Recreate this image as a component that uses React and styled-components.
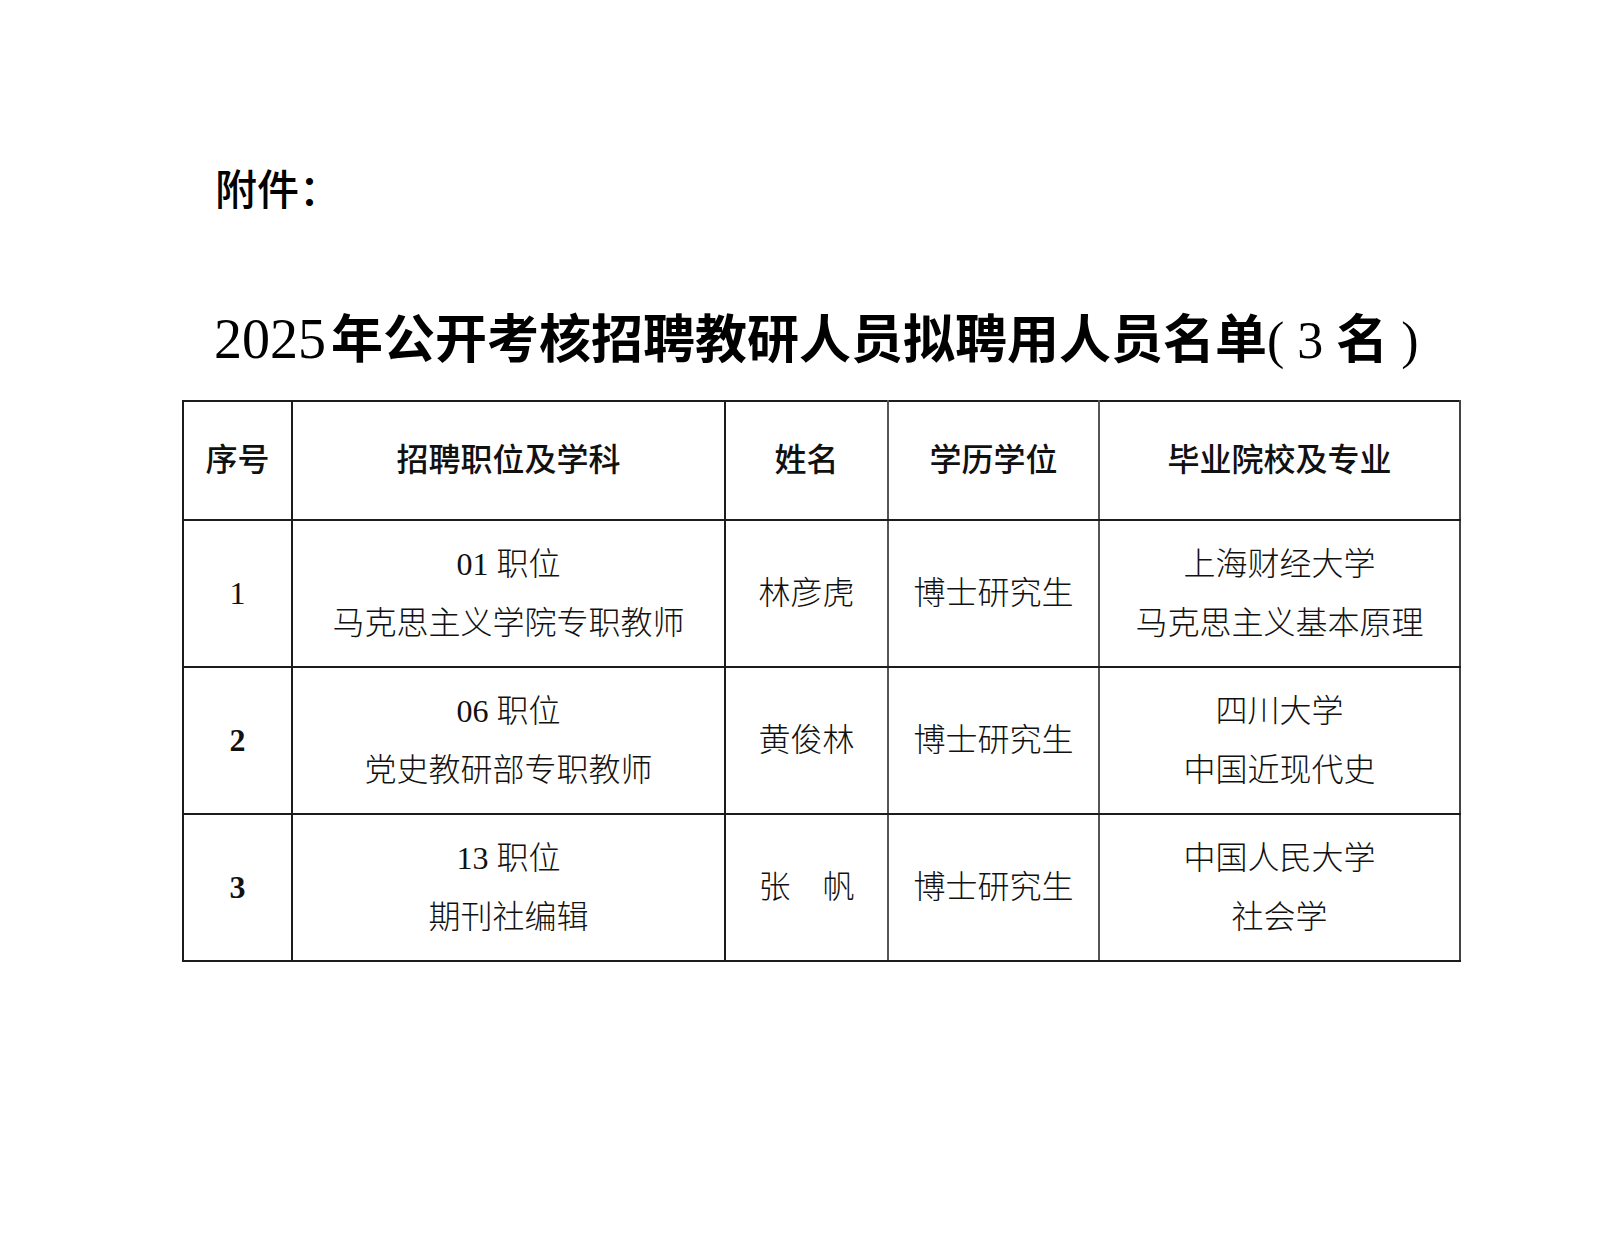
import React from "react";
import styled, { createGlobalStyle } from "styled-components";

const GlobalStyle = createGlobalStyle`
  html, body {
    margin: 0;
    padding: 0;
    background: #ffffff;
  }
  body {
    font-family: "Liberation Serif", "Noto Sans CJK SC", serif;
    color: #111;
  }
`;

const Page = styled.div`
  width: 1600px;
  height: 1252px;
  box-sizing: border-box;
  padding-top: 166px;
  background: #fff;
`;

const Attachment = styled.div`
  margin-left: 215px;
  font-family: "Noto Sans CJK SC", sans-serif;
  font-size: 42px;
  line-height: 42px;
  font-weight: 500;
  color: #000;
`;

const Title = styled.h1`
  margin: 98px 0 29px 214px;
  font-family: "Liberation Serif", "Noto Sans CJK SC", serif;
  font-size: 52px;
  line-height: 60px;
  font-weight: 700;
  color: #000;
  white-space: nowrap;
`;

const Digits = styled.span`
  font-family: "Liberation Serif", serif;
  font-size: 56px;
  font-weight: 400;
  margin-right: 5px;
`;

const Paren = styled.span`
  font-family: "Liberation Serif", "Noto Sans CJK SC", serif;
  font-weight: 400;
  white-space: pre;
  & > b {
    font-family: "Noto Sans CJK SC", sans-serif;
    font-weight: 700;
  }
`;

const Table = styled.table`
  margin-left: 182px;
  width: 1279px;
  border-collapse: collapse;
  table-layout: fixed;
`;

const HeadRow = styled.tr`
  height: 119px;
`;

const BodyRow = styled.tr`
  height: 147px;
`;

const Cell = styled.td`
  padding: 0;
  text-align: center;
  vertical-align: middle;
  font-size: 32px;
  line-height: 59px;
  font-weight: ${(p) => (p.$head ? 500 : 300)};
  color: #111;
  border-top: 2px solid #1c1c1c;
  border-bottom: 2px solid #1c1c1c;
  border-left: 2px solid ${(p) => p.$lineColor || "#1c1c1c"};
  border-right: 2px solid ${(p) => p.$rightColor || "#1c1c1c"};
  white-space: nowrap;
`;

const IndexNum = styled.span`
  font-family: "Liberation Serif", serif;
  font-size: 32px;
  font-weight: ${(p) => (p.$bold ? 700 : 400)};
`;

const Line = styled.div`
  display: block;
`;

const columns = [109, 433, 163, 211, 361];
const lineColors = ["#1c1c1c", "#1c1c1c", "#1c1c1c", "#555", "#555"];
const rightColors = ["#1c1c1c", "#1c1c1c", "#555", "#555", "#444"];

const headers = ["序号", "招聘职位及学科", "姓名", "学历学位", "毕业院校及专业"];

const rows = [
  {
    idx: "1",
    bold: false,
    post: ["01 职位", "马克思主义学院专职教师"],
    name: "林彦虎",
    degree: "博士研究生",
    school: ["上海财经大学", "马克思主义基本原理"],
  },
  {
    idx: "2",
    bold: true,
    post: ["06 职位", "党史教研部专职教师"],
    name: "黄俊林",
    degree: "博士研究生",
    school: ["四川大学", "中国近现代史"],
  },
  {
    idx: "3",
    bold: true,
    post: ["13 职位", "期刊社编辑"],
    name: "张　帆",
    degree: "博士研究生",
    school: ["中国人民大学", "社会学"],
  },
];

export default function App() {
  return (
    <Page>
      <GlobalStyle />
      <Attachment>附件：</Attachment>
      <Title>
        <Digits>2025</Digits>年公开考核招聘教研人员拟聘用人员名单
        <Paren>
          {"( 3 "}
          <b>名</b>
          {" )"}
        </Paren>
      </Title>
      <Table>
        <colgroup>
          {columns.map((w, i) => (
            <col key={i} style={{ width: w }} />
          ))}
        </colgroup>
        <thead>
          <HeadRow>
            {headers.map((h, i) => (
              <Cell
                as="th"
                key={h}
                $head
                $lineColor={lineColors[i]}
                $rightColor={rightColors[i]}
              >
                {h}
              </Cell>
            ))}
          </HeadRow>
        </thead>
        <tbody>
          {rows.map((r) => (
            <BodyRow key={r.idx}>
              <Cell $lineColor={lineColors[0]} $rightColor={rightColors[0]}>
                <IndexNum $bold={r.bold}>{r.idx}</IndexNum>
              </Cell>
              <Cell $lineColor={lineColors[1]} $rightColor={rightColors[1]}>
                {r.post.map((l) => (
                  <Line key={l}>{l}</Line>
                ))}
              </Cell>
              <Cell $lineColor={lineColors[2]} $rightColor={rightColors[2]}>
                {r.name}
              </Cell>
              <Cell $lineColor={lineColors[3]} $rightColor={rightColors[3]}>
                {r.degree}
              </Cell>
              <Cell $lineColor={lineColors[4]} $rightColor={rightColors[4]}>
                {r.school.map((l) => (
                  <Line key={l}>{l}</Line>
                ))}
              </Cell>
            </BodyRow>
          ))}
        </tbody>
      </Table>
    </Page>
  );
}
